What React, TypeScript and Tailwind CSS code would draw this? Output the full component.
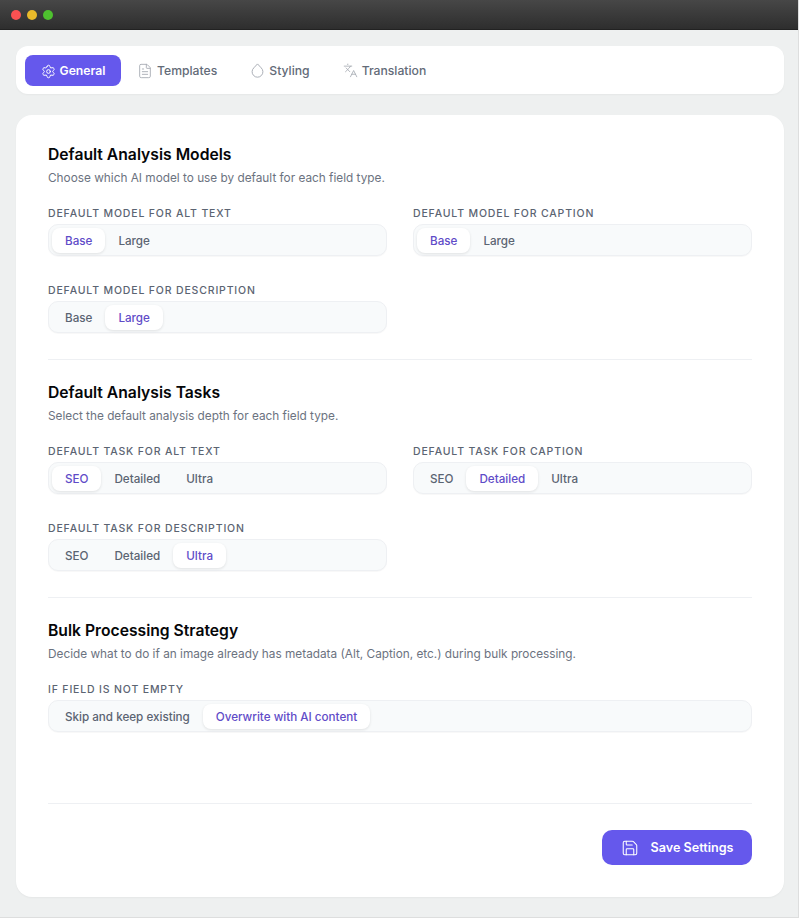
import { FileText, Languages, Save, Settings } from "lucide-react"

function Segmented({ options, active }: { options: string[]; active: string }) {
  return (
    <div className="flex h-[32px] items-center rounded-[10px] border border-[#eef0f3] bg-[#f8fafb] px-[3px] shadow-[0_1px_1px_rgba(0,0,0,0.03)]">
      {options.map((o) =>
        o === active ? (
          <div
            key={o}
            className="mt-[1px] flex h-[25px] items-center rounded-lg bg-white px-[13px] pt-[2px] text-[11.65px] font-medium text-[#5f4cc8] shadow-[0_1px_3px_rgba(0,0,0,0.1)]"
          >
            {o}
          </div>
        ) : (
          <div key={o} className="mt-[1px] flex h-[25px] items-center px-[13px] pt-[2px] text-[11.65px] font-medium text-[#5b6472]">
            {o}
          </div>
        )
      )}
    </div>
  )
}

function Field({ label, options, active }: { label: string; options: string[]; active: string }) {
  return (
    <div>
      <div className="mb-[3px] text-[10.5px] leading-[15px] font-medium tracking-[0.08em] text-[#5b6472] uppercase">{label}</div>
      <Segmented options={options} active={active} />
    </div>
  )
}

function Heading({ title, desc }: { title: string; desc: string }) {
  return (
    <div>
      <h2 className="text-[15.7px] leading-5 font-semibold text-[#050608]">{title}</h2>
      <p className="mt-[4px] text-[11.8px] leading-[18px] text-[#6b7280]">{desc}</p>
    </div>
  )
}

const models = ["Base", "Large"]
const tasks = ["SEO", "Detailed", "Ultra"]

export default function App() {
  return (
    <div className="h-[919px] w-[800px] overflow-hidden bg-white font-['Inter',sans-serif]">
      <div className="flex h-[918px] w-[799px] flex-col border-r border-b border-[#dddede] bg-[#eef0f0]">
        {/* title bar */}
        <div className="flex h-[30px] shrink-0 items-center gap-[6px] border-b border-[#222] bg-gradient-to-b from-[#474747] to-[#2e2e2e] pl-[11px]">
          <span className="h-[10px] w-[10px] rounded-full bg-[#fb5152]" />
          <span className="h-[10px] w-[10px] rounded-full bg-[#e8b92a]" />
          <span className="h-[10px] w-[10px] rounded-full bg-[#4ec12f]" />
        </div>

        <div className="flex flex-1 flex-col pt-4 pr-[14px] pb-[20px] pl-4">
          {/* tabs */}
          <div className="flex h-[48px] items-center rounded-xl bg-white pl-[9px] shadow-[0_1px_2px_rgba(0,0,0,0.04)]">
            <div className="flex h-[31px] w-[96px] items-center justify-center gap-[4px] rounded-lg bg-[#6558ec] pt-[2px] text-[12.2px] font-semibold text-white">
              <Settings size={15} strokeWidth={1.6} />
              General
            </div>
            <div className="ml-[16px] flex items-center gap-[4px] pt-[2px] text-[12.2px] font-medium text-[#636b78]">
              <FileText size={16} strokeWidth={1.3} className="text-[#a3a8b0]" />
              Templates
            </div>
            <div className="ml-[32px] flex items-center gap-[3px] pt-[2px] text-[12.2px] font-medium text-[#636b78]">
              <svg width="17" height="17" viewBox="0 0 24 24" fill="none" stroke="currentColor" strokeWidth="1.3" strokeLinejoin="round" className="text-[#a3a8b0]">
                <path d="M12 2.7 L6.9 8.2 A7.6 7.6 0 1 0 17.1 8.2 Z" />
              </svg>
              Styling
            </div>
            <div className="ml-[33px] flex items-center gap-[4px] pt-[2px] text-[12.2px] font-medium text-[#636b78]">
              <Languages size={15} strokeWidth={1.3} className="text-[#a3a8b0]" />
              Translation
            </div>
          </div>

          {/* main card */}
          <div className="mt-[21px] flex flex-1 flex-col rounded-2xl bg-white px-8 pt-[30px] pb-8 shadow-[0_1px_2px_rgba(0,0,0,0.04)]">
            <Heading title="Default Analysis Models" desc="Choose which AI model to use by default for each field type." />
            <div className="mt-[19px] grid grid-cols-2 gap-x-[26px] gap-y-[27px]">
              <Field label="Default model for Alt Text" options={models} active="Base" />
              <Field label="Default model for Caption" options={models} active="Base" />
              <Field label="Default model for Description" options={models} active="Large" />
            </div>

            <div className="mt-[26px] mb-[23px] border-t border-[#eef0f3]" />

            <Heading title="Default Analysis Tasks" desc="Select the default analysis depth for each field type." />
            <div className="mt-[19px] grid grid-cols-2 gap-x-[26px] gap-y-[27px]">
              <Field label="Default task for Alt Text" options={tasks} active="SEO" />
              <Field label="Default task for Caption" options={tasks} active="Detailed" />
              <Field label="Default task for Description" options={tasks} active="Ultra" />
            </div>

            <div className="mt-[26px] mb-[23px] border-t border-[#eef0f3]" />

            <Heading
              title="Bulk Processing Strategy"
              desc="Decide what to do if an image already has metadata (Alt, Caption, etc.) during bulk processing."
            />
            <div className="mt-[19px]">
              <Field label="If field is not empty" options={["Skip and keep existing", "Overwrite with AI content"]} active="Overwrite with AI content" />
            </div>

            <div className="mt-auto border-t border-[#eef0f3] pt-[26px]">
              <div className="flex justify-end">
                <div className="flex h-[35px] w-[150px] items-center justify-center gap-[12px] rounded-[10px] bg-[#6558ec] text-[12.6px] font-semibold text-white">
                  <Save size={18} strokeWidth={1.4} />
                  <span className="pt-[2px]">Save Settings</span>
                </div>
              </div>
            </div>
          </div>
        </div>
      </div>
    </div>
  )
}
